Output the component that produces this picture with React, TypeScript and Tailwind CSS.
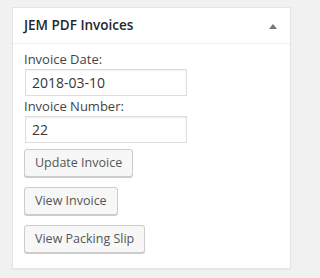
import React from "react";

const font = { fontFamily: '"Open Sans", "Noto Sans", sans-serif' };

function WpButton({ children }: { children: React.ReactNode }) {
  return (
    <button
      type="button"
      className="h-[28px] rounded-[3px] border border-[#cccccc] bg-[#f7f7f7] px-[10px] text-[12.5px] leading-[26px] text-[#555555] shadow-[0_1px_0_#cccccc]"
    >
      {children}
    </button>
  );
}

export default function App() {
  return (
    <div
      className="min-h-screen bg-[#f1f1f1] pl-[12px] pt-[7px]"
      style={font}
    >
      <div className="w-[279px] border border-[#e5e5e5] bg-white shadow-[0_1px_1px_rgba(0,0,0,0.04)]">
        {/* Header */}
        <div className="flex h-[36px] items-center justify-between border-b border-[#eeeeee] pl-[11px] pr-[13px]">
          <h2 className="text-[13.5px] font-semibold text-[#23282d]">
            JEM PDF Invoices
          </h2>
          <svg width="8" height="5" viewBox="0 0 8 5" className="mt-[1px]">
            <polygon points="4,0 8,5 0,5" fill="#72777c" />
          </svg>
        </div>

        {/* Body */}
        <div className="flex flex-col px-[11px] pb-[15px] pt-[5px]">
          <label className="h-[20px] text-[13px] leading-[20px] text-[#444444]">
            Invoice Date:
          </label>
          <input
            defaultValue="2018-03-10"
            className="ml-[1px] h-[27px] w-[162px] border border-[#dddddd] px-[6px] text-[14px] text-[#32373c] shadow-[inset_0_1px_2px_rgba(0,0,0,0.07)] outline-none"
          />
          <label className="h-[20px] text-[13px] leading-[20px] text-[#444444]">
            Invoice Number:
          </label>
          <input
            defaultValue="22"
            className="ml-[1px] h-[27px] w-[162px] border border-[#dddddd] px-[6px] text-[14px] text-[#32373c] shadow-[inset_0_1px_2px_rgba(0,0,0,0.07)] outline-none"
          />
          <div className="mt-[6px] flex flex-col items-start gap-[10px]">
            <WpButton>Update Invoice</WpButton>
            <WpButton>View Invoice</WpButton>
            <WpButton>View Packing Slip</WpButton>
          </div>
        </div>
      </div>
    </div>
  );
}
